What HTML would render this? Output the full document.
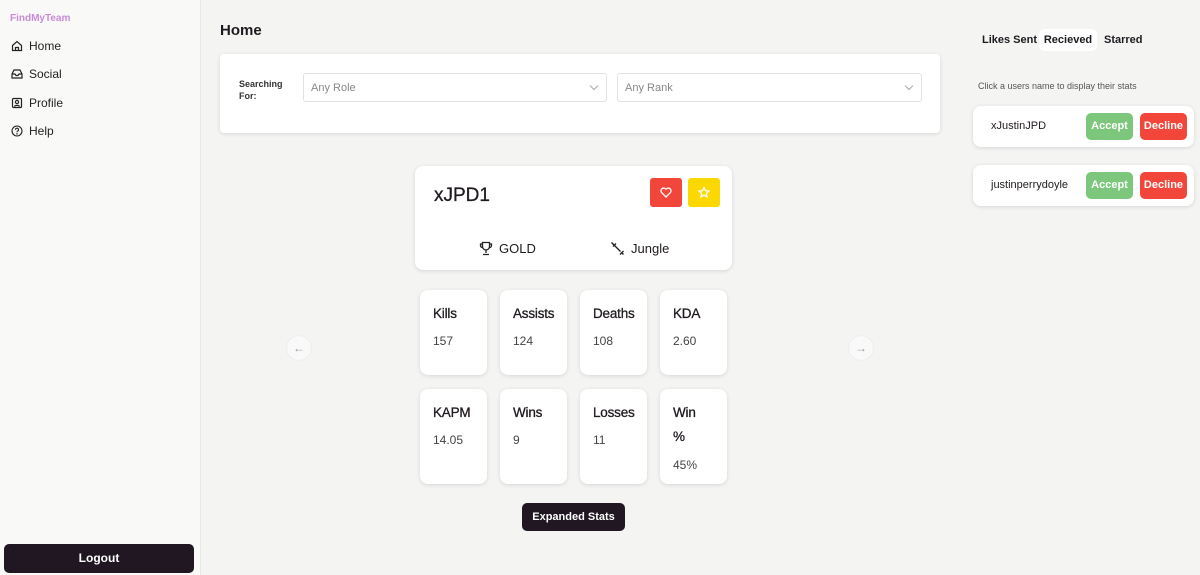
<!DOCTYPE html>
<html><head><style>
*{box-sizing:border-box;margin:0;padding:0}
body{width:1200px;height:575px;overflow:hidden;background:#f4f4f3;font-family:"Liberation Sans",sans-serif;color:#1f1a1f;position:relative}
.side{position:absolute;left:0;top:0;width:201px;height:575px;background:#f9f9f8;border-right:1px solid #e9e8e7}
.logo{position:absolute;left:10px;top:13px;font-size:10px;font-weight:bold;color:#c98ad8}
.nav{position:absolute;left:11px;font-size:12px;display:flex;align-items:center;gap:6px;color:#222}
.nav svg{width:12px;height:12px}
.logout{position:absolute;left:4px;top:544px;width:190px;height:29px;background:#201722;color:#fff;border-radius:5px;font-size:12px;font-weight:bold;text-align:center;line-height:29px}
.abs{position:absolute}
.card{position:absolute;background:#fff;border-radius:8px;box-shadow:0 1px 4px rgba(0,0,0,.12)}
.sel{position:absolute;top:73px;height:29px;background:#fff;border:1px solid #e2e2e2;border-radius:3px;font-size:11px;color:#888;padding:0 7px;line-height:28px}
.sel:after{content:"";position:absolute;right:9px;top:9px;width:5px;height:5px;border-right:1px solid #aaa;border-bottom:1px solid #aaa;transform:rotate(45deg)}
.stat{position:absolute;width:67px;background:#fff;border-radius:8px;box-shadow:0 1px 4px rgba(0,0,0,.12);padding:15px 0 0 13px}
.stat b{display:block;font-size:13.5px;font-weight:normal;-webkit-text-stroke:.3px #1f1a1f;line-height:18px;letter-spacing:-.2px}
.stat b.w{line-height:24px;margin-top:-3px}
.stat span{display:block;font-size:12px;color:#444;margin-top:11px}
.arrow{position:absolute;width:24px;height:24px;border-radius:50%;background:#f9f9f9;color:#999;font-size:12px;text-align:center;line-height:24px;box-shadow:0 0 2px rgba(0,0,0,.08)}
.req{position:absolute;left:973px;width:221px;height:41px}
.req .n{position:absolute;left:18px;top:14px;font-size:11px}
.btn{position:absolute;top:7px;height:27px;border-radius:5px;color:#fff;font-size:11px;font-weight:bold;text-align:center;line-height:27px}
</style></head><body>
<div class="side">
<div class="logo">FindMyTeam</div>
<div class="nav" style="top:39px"><svg viewBox="0 0 12 12" fill="none" stroke="#222" stroke-width="1.2"><path d="M1.5 5.5L6 1.5l4.5 4V10.5h-9z"/><path d="M4.5 10.5V7.5h3v3"/></svg>Home</div>
<div class="nav" style="top:67px"><svg viewBox="0 0 12 12" fill="none" stroke="#222" stroke-width="1.2"><path d="M1 6l2-4h6l2 4v4H1z"/><path d="M1 6h3l1 1.5h2L8 6h3"/></svg>Social</div>
<div class="nav" style="top:96px"><svg viewBox="0 0 12 12" fill="none" stroke="#222" stroke-width="1.2"><rect x="1.5" y="1.5" width="9" height="9" rx="1"/><circle cx="6" cy="5" r="1.6"/><path d="M3.5 9.5c.5-1.5 4.5-1.5 5 0"/></svg>Profile</div>
<div class="nav" style="top:124px"><svg viewBox="0 0 12 12" fill="none" stroke="#222" stroke-width="1.1"><circle cx="6" cy="6" r="5"/><path d="M4.5 4.7a1.5 1.5 0 1 1 2 1.4c-.5.2-.5.6-.5 1.1"/><circle cx="6" cy="8.8" r=".3"/></svg>Help</div>
<div class="logout">Logout</div>
</div>
<div class="abs" style="left:220px;top:22px;font-size:15px;font-weight:bold">Home</div>
<div class="card" style="left:220px;top:54px;width:720px;height:79px;border-radius:4px"></div>
<div class="abs" style="left:239px;top:78px;font-size:9px;font-weight:bold;line-height:12px;color:#333">Searching<br>For:</div>
<div class="sel" style="left:303px;width:304px">Any Role</div>
<div class="sel" style="left:617px;width:305px">Any Rank</div>

<div class="card" style="left:415px;top:166px;width:317px;height:104px"></div>
<div class="abs" style="left:434px;top:185px;font-size:19px;-webkit-text-stroke:.3px #1f1a1f">xJPD1</div>
<div class="abs" style="left:650px;top:178px;width:32px;height:29px;background:#f3463b;border-radius:3px"><svg width="32" height="29" viewBox="0 0 32 29" fill="none" stroke="#fff" stroke-width="1.3"><path d="M16 19l-4.5-4.5a2.6 2.6 0 0 1 4.5-3.3 2.6 2.6 0 0 1 4.5 3.3z"/></svg></div>
<div class="abs" style="left:688px;top:178px;width:32px;height:29px;background:#fdd700;border-radius:3px"><svg width="32" height="29" viewBox="0 0 32 29" fill="none" stroke="#fff" stroke-width="1.3"><path d="M16 9.5l1.5 3.2 3.4.4-2.5 2.3.7 3.4-3.1-1.7-3.1 1.7.7-3.4-2.5-2.3 3.4-.4z"/></svg></div>
<div class="abs" style="left:479px;top:241px;font-size:13px;display:flex;gap:6px;align-items:center"><svg width="14" height="15" viewBox="0 0 14 15" fill="none" stroke="#222" stroke-width="1.3"><path d="M3.5 1.5h7v4a3.5 3.5 0 0 1-7 0z"/><path d="M3.5 3H1.5v1.5a2 2 0 0 0 2 2M10.5 3h2v1.5a2 2 0 0 1-2 2M7 9v3M4 13.5h6"/></svg>GOLD</div>
<div class="abs" style="left:610px;top:241px;font-size:13px;display:flex;gap:6px;align-items:center"><svg width="15" height="15" viewBox="0 0 15 15" fill="none" stroke="#222" stroke-width="1.4"><path d="M1.5 1.5l9 9M3 5.5l3-3M10 13.5l3.5-3.5M11.5 11.5l2 2"/></svg>Jungle</div>

<div class="stat" style="left:420px;top:290px;height:85px"><b>Kills</b><span>157</span></div>
<div class="stat" style="left:500px;top:290px;height:85px"><b>Assists</b><span>124</span></div>
<div class="stat" style="left:580px;top:290px;height:85px"><b>Deaths</b><span>108</span></div>
<div class="stat" style="left:660px;top:290px;height:85px"><b>KDA</b><span>2.60</span></div>
<div class="stat" style="left:420px;top:389px;height:95px"><b>KAPM</b><span>14.05</span></div>
<div class="stat" style="left:500px;top:389px;height:95px"><b>Wins</b><span>9</span></div>
<div class="stat" style="left:580px;top:389px;height:95px"><b>Losses</b><span>11</span></div>
<div class="stat" style="left:660px;top:389px;height:95px"><b class="w">Win<br>%</b><span style="margin-top:9px">45%</span></div>
<div class="arrow" style="left:287px;top:336px">←</div>
<div class="arrow" style="left:849px;top:336px">→</div>
<div class="abs" style="left:522px;top:503px;width:103px;height:28px;background:#201722;color:#fff;border-radius:5px;font-size:11px;font-weight:bold;text-align:center;line-height:28px">Expanded Stats</div>

<div class="abs" style="left:982px;top:34px;font-size:11px;font-weight:bold">Likes Sent</div>
<div class="abs" style="left:1039px;top:29px;width:58px;height:22px;background:#fff;border-radius:5px;font-size:11px;font-weight:bold;text-align:center;line-height:22px">Recieved</div>
<div class="abs" style="left:1104px;top:34px;font-size:11px;font-weight:bold">Starred</div>
<div class="abs" style="left:978px;top:81px;font-size:9px;color:#555">Click a users name to display their stats</div>
<div class="card req" style="top:106px"><div class="n">xJustinJPD</div><div class="btn" style="left:113px;width:47px;background:#7dc77d">Accept</div><div class="btn" style="left:167px;width:47px;background:#f3463b">Decline</div></div>
<div class="card req" style="top:165px"><div class="n">justinperrydoyle</div><div class="btn" style="left:113px;width:47px;background:#7dc77d">Accept</div><div class="btn" style="left:167px;width:47px;background:#f3463b">Decline</div></div>
</body></html>
